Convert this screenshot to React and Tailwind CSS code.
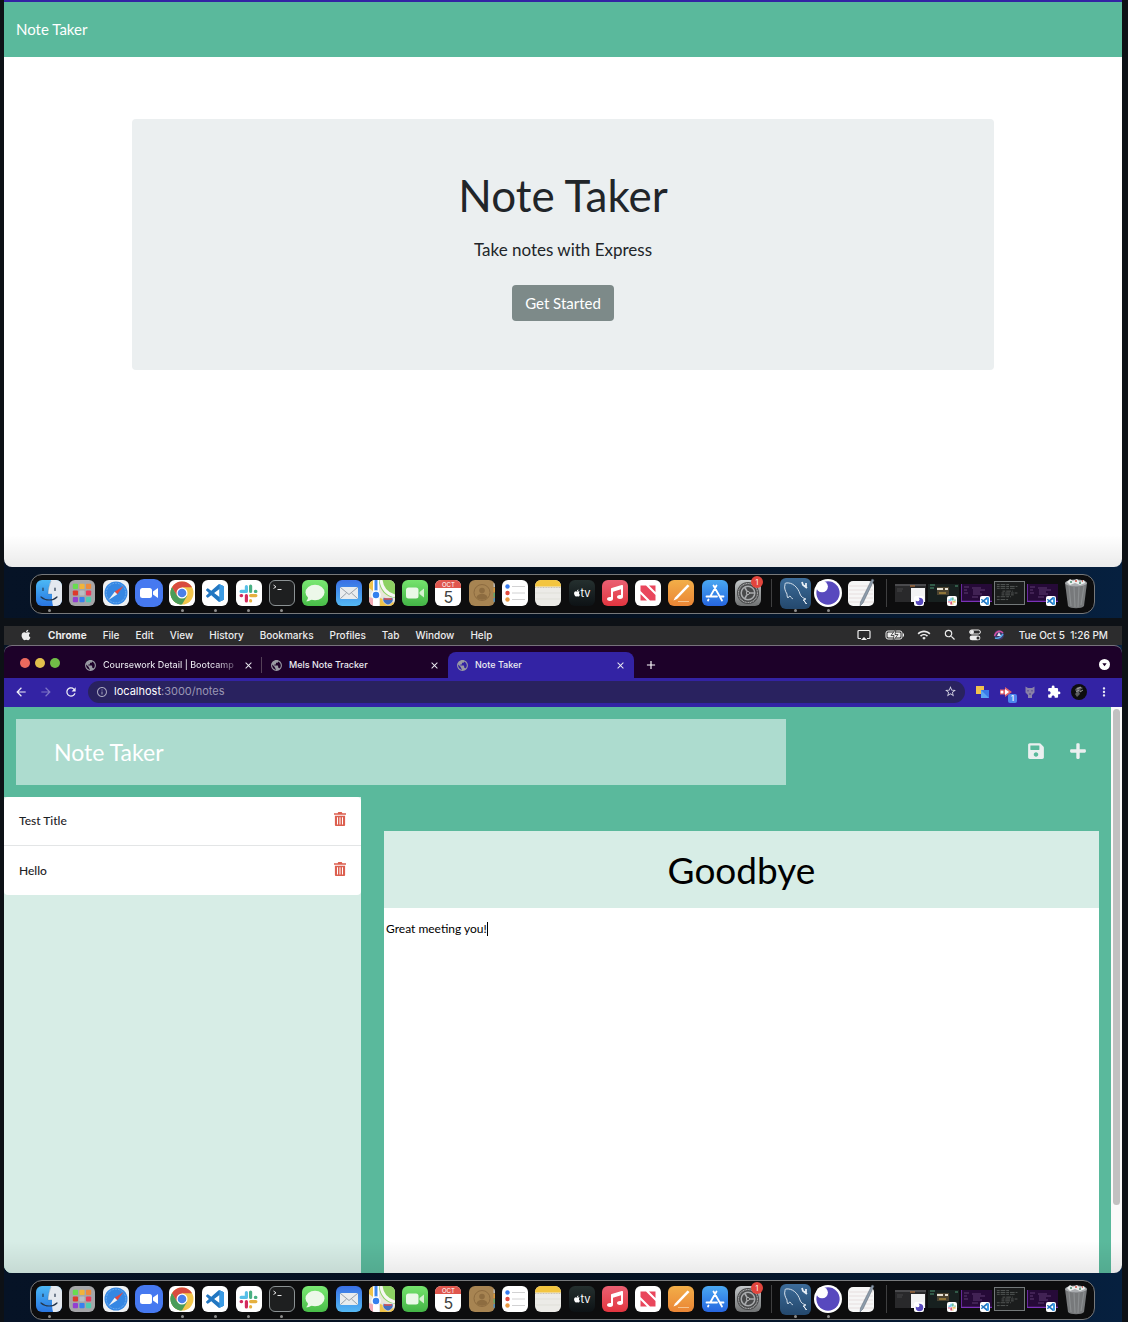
import React from "react";
import { FaApple, FaSave, FaPlus, FaMusic } from "react-icons/fa";
import {
  MdPublic,
  MdArrowBack,
  MdArrowForward,
  MdRefresh,
  MdInfoOutline,
  MdStarBorder,
  MdExtension,
  MdMoreVert,
  MdWifi,
  MdClose,
  MdAdd,
  MdSearch,
} from "react-icons/md";

const VSCODE_PATH =
  "M23.15 2.587L18.21.21a1.494 1.494 0 0 0-1.705.29l-9.46 8.63-4.12-3.128a.999.999 0 0 0-1.276.057L.327 7.261A1 1 0 0 0 .326 8.74L3.899 12 .326 15.26a1 1 0 0 0 .001 1.479L1.65 17.94a.999.999 0 0 0 1.276.057l4.12-3.128 9.46 8.63a1.492 1.492 0 0 0 1.704.29l4.942-2.377A1.5 1.5 0 0 0 24 20.06V3.939a1.5 1.5 0 0 0-.85-1.352zm-5.146 14.861L10.826 12l7.178-5.448v10.896z";

function Art({ children, box = "0 0 26 26", className = "size-full" }) {
  return (
    <svg viewBox={box} className={className} fill="none" aria-hidden="true">
      {children}
    </svg>
  );
}

function DockApp({ name, tile, running, badge, size = "size-[26px] rounded-md", children }) {
  return (
    <button type="button" aria-label={name} className="relative flex size-[26px] shrink-0 items-center justify-center">
      <span className={`flex shrink-0 items-center justify-center overflow-hidden ${size} ${tile}`}>{children}</span>
      {running && <span className="absolute -bottom-1.5 size-[3px] rounded-full bg-[#8e8e8e]" />}
      {badge && (
        <span className="absolute -right-0.5 -top-1 flex size-3 items-center justify-center rounded-full bg-[#e2463d] text-[7px] leading-none text-white">
          {badge}
        </span>
      )}
    </button>
  );
}

function SlackMark({ className }) {
  return (
    <Art box="0 0 18 18" className={className}>
      <g strokeWidth="3" strokeLinecap="round">
        <path d="M7 2.5v4.5M2 7h5" stroke="#56bfe8" />
        <path d="M11 2v5M16 7h-.5" stroke="#49b083" />
        <path d="M11 11h5M11 16v-.2" stroke="#e5b03f" />
        <path d="M7 11v5M2 11h.5" stroke="#d32a5d" />
      </g>
    </Art>
  );
}

function CodeMark({ className }) {
  return (
    <Art box="0 0 24 24" className={className}>
      <path d={VSCODE_PATH} fill="#2277c2" />
      <path d="M18 0.3 23.2 2.6 24 4v16l-.8 1.4-5.2 2.3z" fill="#3b9be4" />
    </Art>
  );
}

function InsomniaMark({ className }) {
  return (
    <Art className={className}>
      <circle cx="13" cy="13" r="13" fill="#fff" />
      <circle cx="13" cy="13" r="10.8" fill="#5849be" />
      <circle cx="7.5" cy="7" r="5.4" fill="#fff" />
    </Art>
  );
}

function LaunchpadArt() {
  const colors = ["#67dc50", "#f1b43a", "#ee8b3c", "#dd3a2c", "#b9bec4", "#e93a5a", "#9340d0", "#3a80ee", "#4fcdb0"];
  return (
    <Art>
      {colors.map((c, i) => (
        <rect key={c} x={3.8 + (i % 3) * 6.6} y={3.8 + Math.floor(i / 3) * 6.6} width="5.2" height="5.2" rx="1" fill={c} />
      ))}
    </Art>
  );
}

function Thumb({ label, tile, mark, children }) {
  return (
    <button type="button" aria-label={label} className="relative h-6 w-[31px] shrink-0">
      <span className={`block w-full overflow-hidden ${tile}`}>{children}</span>
      {mark && (
        <span className="absolute -bottom-px right-0.5 flex size-[10px] items-center justify-center rounded-xs bg-white">{mark}</span>
      )}
    </button>
  );
}

function CodeThumb() {
  return (
    <Art box="0 0 31 18">
      <path d="M0 0v18M0 17.5h31" stroke="#7b32b8" strokeWidth="1.6" />
      <path d="M3 3h5M3 6h3M3 9h4M11 4h9M12 6h12M12 8h7M12 10h9M11 13h6" stroke="#77508b" strokeWidth=".7" />
    </Art>
  );
}

function Dock() {
  return (
    <nav
      aria-label="Dock"
      className="ml-[26px] mr-[27px] flex h-10 items-center rounded-xl border border-[#77797b] bg-[#0d0d0e] pb-0.5 pl-[5px] pr-1.5 font-['Inter',sans-serif]"
    >
      <div className="flex flex-1 items-center justify-between">
        <DockApp name="Finder" running tile="bg-linear-to-b from-[#4cb8f5] to-[#2a75e0]">
          <Art>
            <path d="M15 0c-2 5-3 9-3 14h4c0 5 0 8 1 12h9V0z" fill="#e4e9ef" />
            <path d="M7 8v2.500M19 8v2.500M5 17c4.500 4 12 4 16 0" stroke="#26384d" strokeWidth="1.200" strokeLinecap="round" />
            <path d="M15 1c-2 5-3 9-3 13h4" stroke="#38618c" strokeWidth=".3" />
          </Art>
        </DockApp>
        <DockApp name="Launchpad" tile="bg-[#a5a5a8]">
          <LaunchpadArt />
        </DockApp>
        <DockApp name="Safari" tile="bg-[#eef0f2]">
          <Art>
            <circle cx="13" cy="13" r="11.500" fill="#3587e3" />
            <circle cx="13" cy="13" r="9.800" stroke="#8fc4f5" strokeWidth="1" strokeDasharray=".6 1" />
            <path d="m20.500 6-6.200 8.300-2.600-2.600z" fill="#e5483f" />
            <path d="m5.500 20 6.200-8.300 2.600 2.600z" fill="#f1f3f5" />
          </Art>
        </DockApp>
        <DockApp name="Zoom" size="size-7 rounded-[9px]" tile="bg-[#4679f0]">
          <Art box="0 0 28 28">
            <rect x="5" y="9" width="12" height="10" rx="2.500" fill="#fff" />
            <path d="m18 12.500 5-3.500v10l-5-3.500z" fill="#fff" />
          </Art>
        </DockApp>
        <DockApp name="Chrome" running tile="bg-white">
          <Art>
            <circle cx="13" cy="13" r="11.500" fill="#f2c64c" />
            <path d="M13 13 3 7.300A11.500 11.500 0 0 1 23 7.300H13z" fill="#d84b3e" />
            <path d="M3 7.300A11.500 11.500 0 0 0 13 24.500l5-8.600L8 15.800z" fill="#4a9c59" />
            <path d="M3 7.300 8.200 16 13 13V7.300z" fill="#d84b3e" />
            <path d="M3 7.300 8 16l5 2.600-1 5.900A11.500 11.500 0 0 1 3 7.300z" fill="#4a9c59" />
            <circle cx="13" cy="13" r="5.500" fill="#fff" />
            <circle cx="13" cy="13" r="4.300" fill="#4b80ea" />
          </Art>
        </DockApp>
        <DockApp name="Visual Studio Code" running tile="bg-white">
          <CodeMark className="size-[18px]" />
        </DockApp>
        <DockApp name="Slack" running tile="bg-white">
          <SlackMark className="size-[19px]" />
        </DockApp>
        <DockApp name="Terminal" running tile="border border-[#8c9294] bg-[#1e1f20]">
          <Art box="0 0 24 24">
            <path d="m3.500 4 2.500 1.800L3.500 7.500M7.500 8.500h4" stroke="#e7e7e7" strokeWidth="1" />
          </Art>
        </DockApp>
        <DockApp name="Messages" tile="bg-linear-to-b from-[#7ae873] to-[#48bd48]">
          <Art>
            <ellipse cx="13" cy="12.500" rx="9.500" ry="7.800" fill="#ecf8e9" />
            <path d="M6 17c0 2-.8 3.500-2 4.300 2.500 0 4.500-.8 6-2.300z" fill="#ecf8e9" />
          </Art>
        </DockApp>
        <DockApp name="Mail" tile="bg-linear-to-b from-[#3a6fe4] to-[#55b8f2]">
          <Art>
            <rect x="4" y="7" width="18" height="12" rx="1.500" fill="#e9ecee" />
            <path d="m4.500 7.500 8.500 7 8.500-7M4.500 18.500l6-5.500M21.500 18.500l-6-5.500" stroke="#9099a2" strokeWidth=".9" />
          </Art>
        </DockApp>
        <DockApp name="Maps" tile="bg-[#e9e6da]">
          <Art>
            <path d="M10 0h16v18C17 17 10 10 10 0z" fill="#8dd163" />
            <path d="M12 0c1 8 6 14 14 16" stroke="#f7f7f2" strokeWidth="3" />
            <path d="M0 0h4v11L0 8z" fill="#efc34a" />
            <path d="M0 17l9 3v6H0z" fill="#f1a9b4" />
            <path d="M11 18l15 5v3H11z" fill="#efc34a" />
            <path d="M7 0v26" stroke="#fff" strokeWidth="6" />
            <path d="M7 0v13" stroke="#3f87ec" strokeWidth="3" />
            <circle cx="7" cy="15" r="4" fill="#3380ee" stroke="#fff" strokeWidth="1.500" />
            <path d="M14.500 17.500c3 1 6 1 9 0 1.500 3 0 6-4.500 7.500-4.500-1.500-6-4.500-4.500-7.500z" fill="#4371c0" stroke="#e9edf5" strokeWidth=".6" />
            <path d="M15 19h8" stroke="#d94d4d" strokeWidth="1.500" />
          </Art>
        </DockApp>
        <DockApp name="FaceTime" tile="bg-linear-to-b from-[#75e36d] to-[#43b546]">
          <Art>
            <rect x="4" y="7.500" width="12.500" height="11" rx="2.500" fill="#eaf8e7" />
            <path d="m17.500 12 4.500-3.500v9L17.500 14z" fill="#d5f0d0" />
          </Art>
        </DockApp>
        <DockApp name="Calendar" tile="bg-white">
          <span className="flex size-full flex-col items-center">
            <span className="w-full bg-[#e0574e] pt-px text-center text-[6px] leading-[7px] text-white">OCT</span>
            <span className="text-base leading-[18px] text-[#404040]">5</span>
          </span>
        </DockApp>
        <DockApp name="Contacts" tile="bg-[#a78452]">
          <Art>
            <path d="M25.500 3v4" stroke="#bbb" strokeWidth="2" />
            <path d="M25.500 8v4" stroke="#d99a3d" strokeWidth="2" />
            <path d="M25.500 13v4" stroke="#61a86a" strokeWidth="2" />
            <path d="M25.500 18v4" stroke="#4b8fbe" strokeWidth="2" />
            <circle cx="13" cy="12.500" r="8" stroke="#8d6c40" strokeWidth="1" />
            <circle cx="13" cy="10.500" r="2.800" fill="#8d6c40" />
            <path d="M7.500 17.500c1-5 10-5 11 0-3 3-8 3-11 0z" fill="#8d6c40" />
          </Art>
        </DockApp>
        <DockApp name="Reminders" tile="bg-white">
          <Art>
            <circle cx="5.500" cy="6.500" r="2.200" fill="#377cf0" />
            <circle cx="5.500" cy="13" r="2.200" fill="#e34b40" />
            <circle cx="5.500" cy="19.500" r="2.200" fill="#e99840" />
            <path d="M10 6.500h13M10 13h13M10 19.500h13" stroke="#c6c6c8" strokeWidth=".8" />
          </Art>
        </DockApp>
        <DockApp name="Notes" tile="bg-[#ecebe7]">
          <Art>
            <path d="M0 0h26v6.500H0z" fill="#f3c53f" />
            <path d="M0 7.500h26" stroke="#b8b09b" strokeWidth=".7" strokeDasharray="1 .6" />
            <path d="M0 13h26M0 19h26" stroke="#dad8d2" strokeWidth=".6" />
          </Art>
        </DockApp>
        <DockApp name="TV" tile="bg-linear-to-b from-[#25302f] to-[#0d1215]">
          <span className="flex items-center text-[11px] leading-none text-white">
            <FaApple className="size-2" />
            tv
          </span>
        </DockApp>
        <DockApp name="Music" tile="bg-linear-to-b from-[#ea5f72] to-[#e2343f]">
          <FaMusic className="size-4 text-white" />
        </DockApp>
        <DockApp name="News" tile="bg-white">
          <Art>
            <path d="M5.500 5.500H11l9.500 9.500v5.500H15L5.500 11zM14 5.500h6.500V12zM5.500 14v6.500H12z" fill="#e9465c" />
          </Art>
        </DockApp>
        <DockApp name="Pages" tile="bg-linear-to-b from-[#f2ae48] to-[#ea8535]">
          <Art>
            <path d="M5.500 20.500 7 17.500 19.500 4.500l2 1.500L9 19z" fill="#fff" />
            <path d="M10 21.500h11" stroke="#f8d3a5" strokeWidth=".8" />
          </Art>
        </DockApp>
        <DockApp name="App Store" tile="bg-linear-to-b from-[#4ba8f1] to-[#2765df]">
          <Art>
            <path
              d="M14.500 5.500 8.500 16M6.500 19.500 6 20.500M11.500 5.500l8.500 15M4.500 16.500h10.500M18.500 16.500h3"
              stroke="#fff"
              strokeWidth="1.800"
              strokeLinecap="round"
            />
          </Art>
        </DockApp>
        <DockApp name="System Preferences" badge="1" tile="bg-linear-to-b from-[#c3c7c9] to-[#707273]">
          <Art>
            <circle cx="13" cy="13" r="11" fill="#48494a" />
            <circle cx="13" cy="13" r="9.500" stroke="#a4a5a6" strokeWidth="1.200" strokeDasharray="1.200 .5" />
            <circle cx="13" cy="13" r="6.800" stroke="#a9abad" strokeWidth="1.500" />
            <path d="M13 13h7M13 13l-3.500-6M13 13l-3.500 6" stroke="#a9abad" strokeWidth="1.500" />
            <circle cx="13" cy="13" r="1.500" fill="#2c2d2e" stroke="#b8b9ba" />
          </Art>
        </DockApp>
      </div>

      <span className="ml-2.5 h-7 w-px bg-[#3f3f40]" />
      <div className="ml-2.5 flex items-center gap-[7px]">
        <DockApp name="MySQL Workbench" running size="size-[31px] rounded-md" tile="bg-linear-to-b from-[#3c6c99] to-[#24486d]">
          <Art box="0 0 31 31">
            <path
              d="M8 20c-1-1-1-3-1-4-2-3-3-7-2-9 0-1 0-2 1-2 6-1 12 4 14 11 1 3 3 4 6 5l-3 1 4 4M8 20c1-1 1-2 2-2 1 2 2 2 3 3M24 22l2 4"
              stroke="#e6eef5"
              strokeWidth=".9"
            />
            <path d="m22 4 1 3 4 3M26 5v3h-2" stroke="#e6eef5" strokeWidth="1.800" />
          </Art>
        </DockApp>
        <DockApp name="Insomnia" running size="size-7" tile="">
          <InsomniaMark className="size-full" />
        </DockApp>
        <DockApp name="TextEdit" size="size-[30px]" tile="">
          <Art box="0 0 30 30">
            <rect x="2" y="3" width="26" height="25" rx="5" fill="#f6f6f6" />
            <path d="M3 8h24M3 12h24M3 16h24M3 20h24M3 24h24" stroke="#ddd0d0" strokeWidth=".6" />
            <path d="m26 1 2 1-11 23-3 3 .5-4z" fill="#8d9cab" stroke="#566370" strokeWidth=".5" />
          </Art>
        </DockApp>
      </div>
      <span className="ml-3 h-7 w-px bg-[#3f3f40]" />
      <div className="ml-2 flex items-center gap-0.5">
        <Thumb label="Insomnia window" tile="h-[18px] bg-[#29292b]" mark={<InsomniaMark className="size-[9px]" />}>
          <Art box="0 0 31 18">
            <path d="M0 1h31" stroke="#4a4a4d" strokeWidth="2" />
            <path d="M15 2h5" stroke="#c97a39" />
            <path d="M2 5h6M2 7h5" stroke="#555" strokeWidth=".7" />
            <path d="M16 4h14v14H16z" fill="#f3f3f4" />
          </Art>
        </Thumb>
        <Thumb label="Slack window" tile="h-[18px] bg-[#17201f]" mark={<SlackMark className="size-2" />}>
          <Art box="0 0 31 18">
            <path d="M2 1h5M2 4h4M27 2h3" stroke="#4c9470" />
            <path d="M9 3h12v8H9z" fill="#4b4330" />
            <path d="M9 5h6M17 5h3" stroke="#e5e0d2" strokeWidth="2" />
            <path d="M11 9h7" stroke="#d3a841" />
          </Art>
        </Thumb>
        <Thumb label="Code window" tile="h-[18px] bg-[#260a38]" mark={<CodeMark className="size-2" />}>
          <CodeThumb />
        </Thumb>
        <Thumb label="Terminal window" tile="h-6 border border-[#737879] bg-[#1b1d1d]">
          <Art box="0 0 31 22">
            <path
              d="M2 2h14M2 4h22M2 6h20M8 9h11M7 11h17M7 13h13M2 15h15M2 18h12"
              stroke="#6f7371"
              strokeWidth=".7"
              strokeDasharray="3 1 5 1"
            />
          </Art>
        </Thumb>
        <Thumb label="Second code window" tile="h-[18px] bg-[#260a38]" mark={<CodeMark className="size-2" />}>
          <CodeThumb />
        </Thumb>
        <button type="button" aria-label="Trash" className="ml-1 h-[31px] w-6">
          <Art box="0 0 24 31">
            <path d="M1 5h22l-3 23c-2 3-14 3-16 0z" fill="#77797b" />
            <path d="M5 8l2 20M10 9l1 20M15 9l-1 20M20 8l-3 19" stroke="#8b8e90" strokeWidth="1.200" />
            <ellipse cx="12" cy="5" rx="11" ry="3.500" fill="#a9acaf" />
            <path d="m3 4 3-3 3 2 4-2 3 3 4-2 1 3-5 2-5-2-5 2z" fill="#eceeee" />
            <path d="M6 4h2M15 5h2" stroke="#4e8f71" strokeWidth="1.500" />
            <path d="M11 3h2M18 3h1" stroke="#ca5548" strokeWidth="1.500" />
          </Art>
        </button>
      </div>
    </nav>
  );
}

function MenuBar() {
  const items = ["File", "Edit", "View", "History", "Bookmarks", "Profiles", "Tab", "Window", "Help"];
  return (
    <div className="flex h-[19px] items-center justify-between bg-[#2c2c2d] pb-px pl-4 pr-3.5 font-['Inter',sans-serif] text-[10px] font-medium leading-none text-[#ededed]">
      <div className="flex items-center gap-4">
        <FaApple className="size-3" />
        <button type="button" className="font-bold">
          Chrome
        </button>
        {items.map((item) => (
          <button type="button" key={item}>
            {item}
          </button>
        ))}
      </div>
      <div className="flex items-center">
        <Art box="0 0 14 12" className="mr-3.5 h-3 w-3.5">
          <path d="M4 9.500H2A1 1 0 0 1 1 8.500V2.500a1 1 0 0 1 1-1h10a1 1 0 0 1 1 1v6a1 1 0 0 1-1 1h-2" stroke="#ededed" strokeWidth="1.200" />
          <path d="M7 8 10 11H4z" fill="#ededed" />
        </Art>
        <Art box="0 0 20 12" className="mr-3 h-3 w-5">
          <rect x="1" y="2" width="16" height="8" rx="2" stroke="#ededed" />
          <rect x="2.500" y="3.500" width="13" height="5" rx="1" fill="#ededed" />
          <path d="M11 0 6 6.500h3L8 12l5-6.500h-3z" fill="#ededed" stroke="#2c2c2d" strokeWidth=".8" />
          <path d="M18.500 4.500v3" stroke="#ededed" />
        </Art>
        <MdWifi className="mr-3 size-3.5" />
        <MdSearch className="mr-3 size-3.5" />
        <Art box="0 0 12 12" className="mr-3 size-3">
          <rect x=".6" y="1" width="10.800" height="4" rx="2" stroke="#ededed" />
          <circle cx="3" cy="3" r="2" fill="#ededed" />
          <rect x=".6" y="6.500" width="10.800" height="4.800" rx="2.400" fill="#ededed" />
          <circle cx="9" cy="9" r="1.500" fill="#2c2c2d" />
        </Art>
        <Art box="0 0 12 12" className="mr-3.5 size-3">
          <circle cx="6" cy="6" r="5" fill="#3e3768" />
          <path d="M1.500 7C3 2 7 1 10 4" stroke="#d44fa0" strokeWidth="1.500" />
          <path d="M2 9c3 1 6-1 8-4" stroke="#55a7e5" strokeWidth="1.500" />
          <path d="m4 7 2-4 2 4z" fill="#e6e4f4" />
        </Art>
        <span className="whitespace-pre">Tue Oct 5  1:26 PM</span>
      </div>
    </div>
  );
}

function Tab({ title, active, divider, fade }) {
  return (
    <div
      className={`flex h-[26px] w-[186px] items-center pl-2 pr-2 ${active ? "rounded-t-lg bg-[#3323a4]" : ""} ${divider ? "relative" : ""}`}
    >
      <MdPublic className="mr-1.5 size-[13px] shrink-0 text-[#999aa3]" />
      <button
        type="button"
        className={`flex-1 whitespace-nowrap text-left ${
          fade ? "bg-linear-to-r from-[#ececf2] from-85% to-[#ececf2]/30 bg-clip-text text-transparent" : "text-[#ececf2]"
        }`}
      >
        {title}
      </button>
      <button type="button" aria-label={`Close ${title}`} className="ml-2 text-[#ececf2]">
        <MdClose className="size-[11px]" />
      </button>
      {divider && <span className="absolute right-0 h-4 w-px bg-[#544057]" />}
    </div>
  );
}

function BrowserBars() {
  return (
    <div className="overflow-hidden rounded-t-lg border-t border-[#77727c] bg-[#1d0129] font-['Inter',sans-serif] text-[9px] font-medium">
      <div className="flex h-8 items-end justify-between">
        <div className="flex items-end">
          <div className="flex w-[72px] items-center gap-[5px] self-center pb-1 pl-4">
            <button type="button" aria-label="Close window" className="size-2.5 rounded-full bg-[#ec695e]" />
            <button type="button" aria-label="Minimize window" className="size-2.5 rounded-full bg-[#e1c04c]" />
            <button type="button" aria-label="Zoom window" className="size-2.5 rounded-full bg-[#71be47]" />
          </div>
          <Tab title="Coursework Detail | Bootcamp" divider fade />
          <Tab title="Mels Note Tracker" />
          <Tab title="Note Taker" active />
          <button type="button" aria-label="New tab" className="mb-1.5 ml-2.5 text-white">
            <MdAdd className="size-3.5" />
          </button>
        </div>
        <button type="button" aria-label="Search tabs" className="mb-2 mr-3">
          <Art box="0 0 11 11" className="size-[11px]">
            <circle cx="5.500" cy="5.500" r="5.500" fill="#fff" />
            <path d="M3.300 4.300h4.400L5.500 7.300z" fill="#1d0129" />
          </Art>
        </button>
      </div>
      <div className="flex h-[29px] items-center bg-[#3323a4] pb-0.5 pl-2.5 pr-[11px]">
        <div className="flex items-center gap-[11px] text-[#efeff8]">
          <button type="button" aria-label="Back">
            <MdArrowBack className="size-3.5" />
          </button>
          <button type="button" aria-label="Forward" className="text-[#7f76c6]">
            <MdArrowForward className="size-3.5" />
          </button>
          <button type="button" aria-label="Reload">
            <MdRefresh className="size-3.5" />
          </button>
        </div>
        <div className="mx-2.5 flex h-[22px] flex-1 items-center rounded-full bg-[#29225f] pl-2 pr-2 text-[11px]">
          <MdInfoOutline className="mr-1.5 size-3 text-[#a5a3bc]" />
          <a href="#notes" className="flex-1 font-normal text-[#9a97b4]">
            <span className="text-white">localhost</span>:3000/notes
          </a>
          <button type="button" aria-label="Bookmark this tab">
            <MdStarBorder className="size-[13px] text-[#d0cfe0]" />
          </button>
        </div>
        <div className="flex items-center gap-[10px]">
          <button type="button" aria-label="Translate extension">
            <Art box="0 0 14 14" className="size-3.5">
              <path d="M1 1h8v8H1z" fill="#f1c24d" />
              <path d="M6 5h8v8H6z" fill="#3a79ea" />
              <path d="m6 5 8 8H6z" fill="#5aa4f4" />
            </Art>
          </button>
          <button type="button" aria-label="Video extension" className="relative">
            <Art box="0 0 14 14" className="size-3.5">
              <path d="M1 4.500h5V2l7 5-7 5V9.500H1z" fill="#e3646b" />
              <path d="m6 4 4 3-4 3z" fill="#fff" />
              <circle cx="3" cy="7" r="1.500" fill="#fff" />
            </Art>
            <span className="absolute -bottom-1 -right-1 size-[9px] rounded-xs bg-[#4d86ed] text-[8px] leading-[9px] text-white">1</span>
          </button>
          <button type="button" aria-label="Octo extension">
            <Art box="0 0 14 14" className="size-3.5">
              <path d="M2.500 1.500 5 3h4l2.500-1.500V7.500L9 10v3H5v-3L2.500 7.500z" fill="#8a82a8" />
              <path d="M5 5v1.500M9 5v1.500M6 9h2" stroke="#4c4388" />
            </Art>
          </button>
          <button type="button" aria-label="Extensions">
            <MdExtension className="size-3.5 text-white" />
          </button>
          <button type="button" aria-label="Profile">
            <Art box="0 0 16 16" className="size-4">
              <circle cx="8" cy="8" r="8" fill="#0d0d0f" />
              <path d="M4 6c2-4 5-4 8-2l-3 2 2 1-3 1 1 2-3 3-2-3 2-2z" fill="#5c5d60" />
              <path d="m6 5 4-2M5 8l3-2M9 8l3-2" stroke="#b8b8ba" strokeWidth=".8" />
            </Art>
          </button>
          <button type="button" aria-label="Browser menu">
            <MdMoreVert className="size-3.5 text-[#e9e9f5]" />
          </button>
        </div>
      </div>
    </div>
  );
}

function NoteItem({ title }) {
  return (
    <li className="flex h-[49px] items-center justify-between px-[15px]">
      <button type="button" className="text-xs font-medium text-[#1d2226]">
        {title}
      </button>
      <button type="button" aria-label={`Delete ${title}`} className="mb-1 text-[#dc5f4f]">
        <svg viewBox="0 0 12 14" className="h-3.5 w-3" fill="currentColor" aria-hidden="true">
          <path d="M0 1.200h3.600L4.300 0h3.400l.7 1.200H12v1.500H0z" />
          <path fillRule="evenodd" d="M.9 3.700h10.200V13a1 1 0 0 1-1 1H1.900a1 1 0 0 1-1-1zM3 5.200v7.200h1V5.200zm2.500 0v7.200h1V5.200zm2.500 0v7.200h1V5.200z" />
        </svg>
      </button>
    </li>
  );
}

function BottomShade() {
  return <div className="pointer-events-none absolute inset-x-0 bottom-0 h-8 bg-linear-to-b from-transparent to-black/8" />;
}

function LandingScreen() {
  return (
    <section className="bg-linear-to-r from-[#061326] via-[#04101f] to-[#06203f] pb-1">
      <div className="relative overflow-hidden rounded-b-lg border-t-2 border-[#3323a4] bg-white pb-[197px]">
        <header className="flex h-[55px] items-center bg-[#5ab99c] px-3">
          <a href="#home" className="text-[15px] text-white">
            Note Taker
          </a>
        </header>
        <main className="mx-32 mt-[62px] flex flex-col items-center rounded-sm bg-[#ebeff0] py-[49px] text-[#212529]">
          <h1 className="text-[44px] leading-[54px]">Note Taker</h1>
          <p className="mt-[13px] text-[17px] leading-[30px]">Take notes with Express</p>
          <button type="button" className="mt-5 h-9 rounded-sm bg-[#7d8a89] px-[13px] text-[15px] text-white">
            Get Started
          </button>
        </main>
        <BottomShade />
      </div>
      <div className="pt-[7px]">
        <Dock />
      </div>
    </section>
  );
}

function NotesScreen() {
  return (
    <section className="mt-2 bg-linear-to-r from-[#061326] via-[#04101f] to-[#06203f] pb-0.5">
      <MenuBar />
      <div className="relative overflow-hidden rounded-b-lg">
        <BrowserBars />
        <div className="flex bg-[#fafafa]">
          <main className="flex flex-1 flex-col bg-[#5ab99c]">
            <header className="grid grid-cols-[770fr_313fr] items-center p-3">
              <a href="#home" className="flex h-[66px] items-center bg-[#addccf] pl-[38px] text-[23px] text-white">
                Note Taker
              </a>
              <div className="flex items-center justify-end gap-6 pb-0.5 pr-3 text-[#ebeff0]">
                <button type="button" aria-label="Save note">
                  <FaSave className="size-[18px]" />
                </button>
                <button type="button" aria-label="New note">
                  <FaPlus className="size-[18px]" />
                </button>
              </div>
            </header>
            <div className="grid grid-cols-[357fr_750fr]">
              <aside className="bg-[#d7ede6]">
                <ul className="divide-y divide-[#e3e5e6] rounded-sm bg-white">
                  <NoteItem title="Test Title" />
                  <NoteItem title="Hello" />
                </ul>
              </aside>
              <div className="flex flex-col pl-[23px] pr-3 pt-[34px]">
                <input
                  aria-label="Note title"
                  defaultValue="Goodbye"
                  className="h-[77px] w-full bg-[#d7ede6] text-center text-[37px] text-black outline-none"
                />
                <div className="relative flex">
                  <textarea
                    aria-label="Note text"
                    defaultValue="Great meeting you!"
                    className="h-[365px] w-full resize-none bg-white px-0.5 pt-3 text-xs leading-[18px] text-black outline-none"
                  />
                  <span className="absolute left-[103px] top-3.5 h-3.5 w-px bg-black" />
                </div>
              </div>
            </div>
          </main>
          <div className="w-[11px] px-0.5 pt-0.5" aria-hidden="true">
            <div className="h-[88%] rounded-full bg-[#c1c1c1]" />
          </div>
        </div>
        <BottomShade />
      </div>
      <div className="pt-[7px]">
        <Dock />
      </div>
    </section>
  );
}

export default function App() {
  return (
    <div className="bg-[#0d1116] pl-1 pr-1.5 font-['Lato',sans-serif]">
      <LandingScreen />
      <NotesScreen />
    </div>
  );
}
